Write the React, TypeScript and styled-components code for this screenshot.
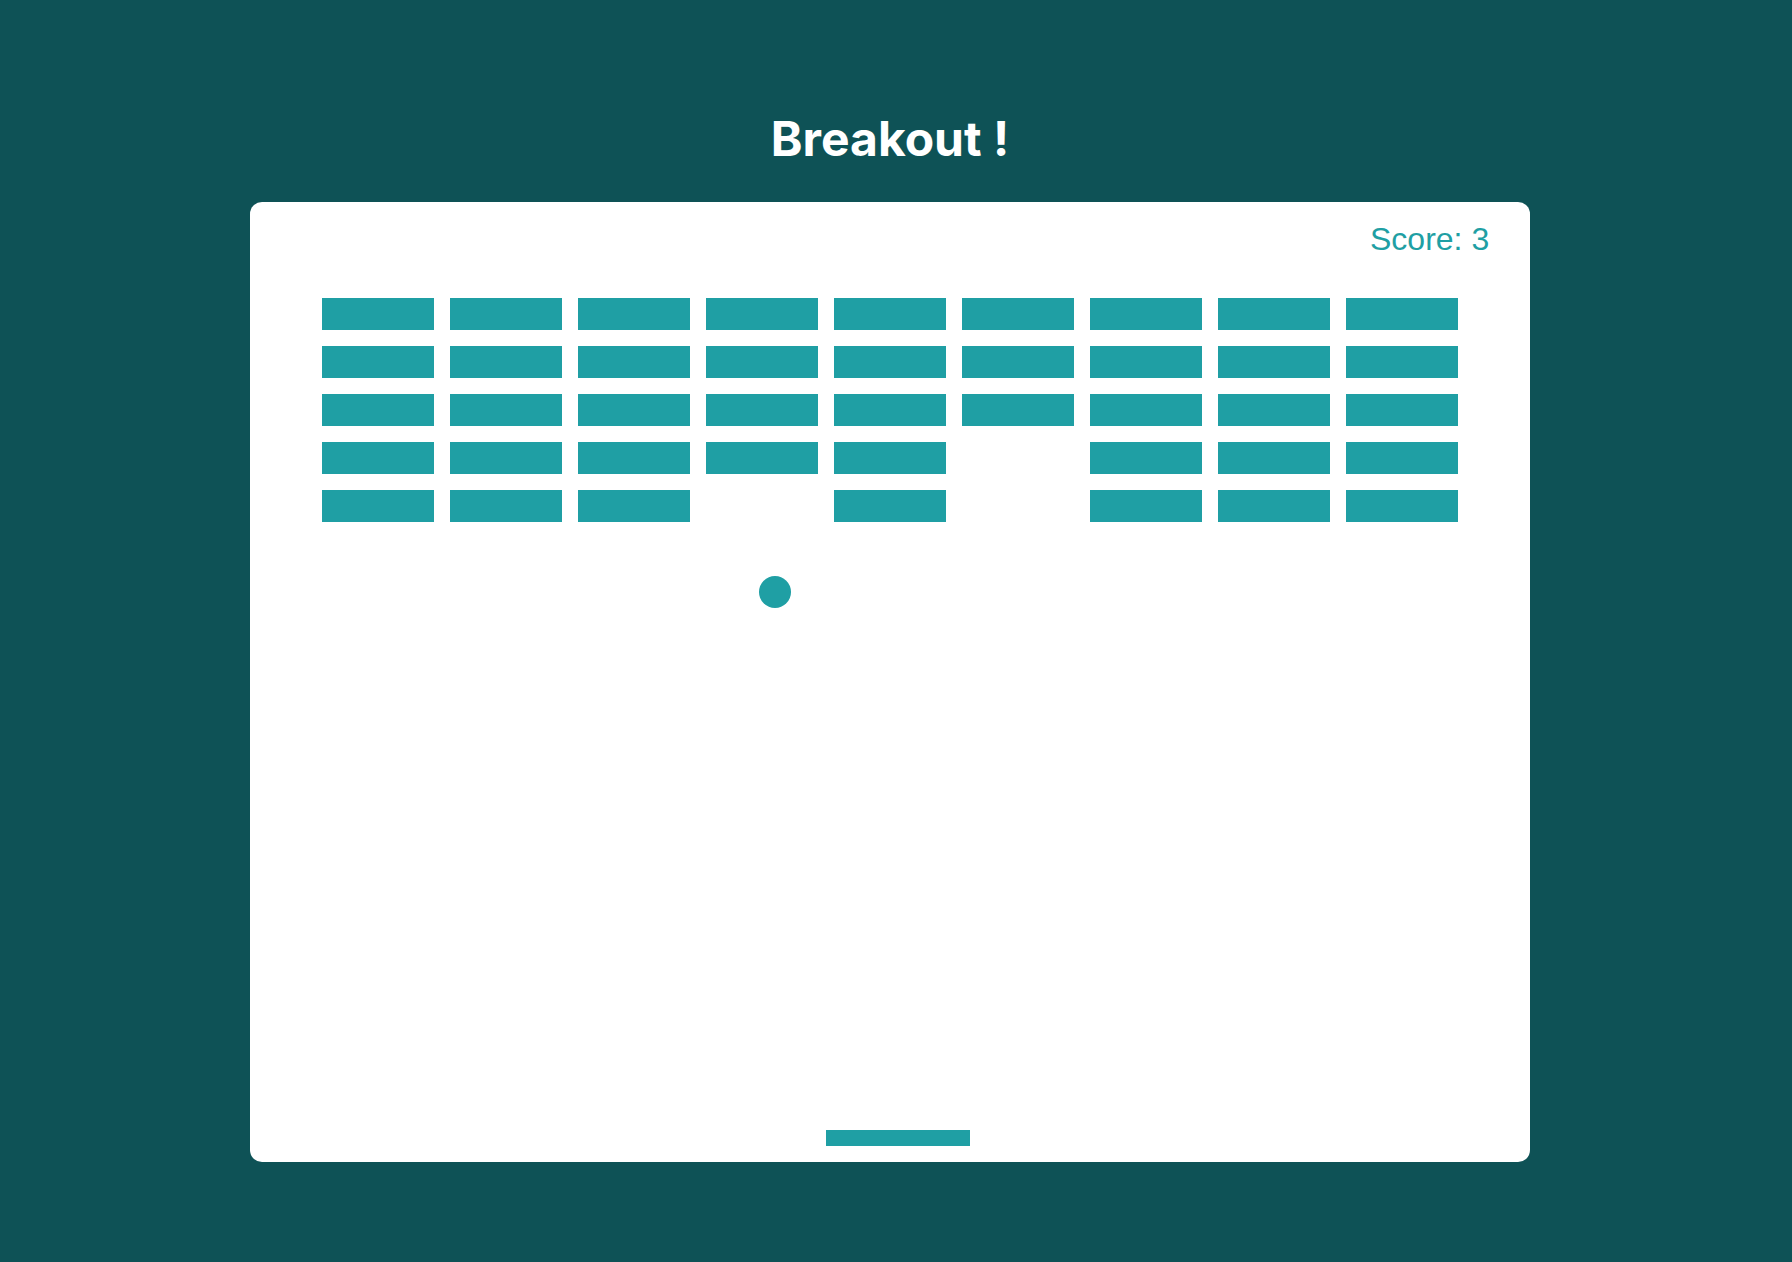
import React from "react";
import styled, { createGlobalStyle } from "styled-components";

const GlobalStyle = createGlobalStyle`
  html, body {
    margin: 0;
    padding: 0;
    background: #0e5256;
  }
  * { box-sizing: border-box; }
`;

const TEAL = "#1f9fa4";

const Page = styled.main`
  min-height: 1262px;
  display: flex;
  flex-direction: column;
  align-items: center;
  padding: 115px 12px 0 0;
  background: #0e5256;
`;

const Title = styled.h1`
  margin: 0 0 39px;
  font-family: Inter, "Noto Sans", sans-serif;
  font-weight: 700;
  font-size: 48px;
  line-height: 48px;
  color: #ffffff;
`;

const Board = styled.div`
  position: relative;
  width: 1280px;
  height: 960px;
  background: #ffffff;
  border-radius: 12px;
  padding: 96px 0 0 72px;
`;

const BrickGrid = styled.div`
  display: grid;
  grid-template-columns: repeat(9, 112px);
  grid-auto-rows: 32px;
  gap: 16px;
`;

const Brick = styled.div<{ $broken: boolean }>`
  background: ${TEAL};
  visibility: ${(p) => (p.$broken ? "hidden" : "visible")};
`;

const Score = styled.div`
  position: absolute;
  left: 1120px;
  top: 21px;
  font-family: "Liberation Sans", Arial, sans-serif;
  font-size: 32px;
  line-height: 32px;
  color: ${TEAL};
`;

const Ball = styled.div`
  position: absolute;
  left: 509px;
  top: 374px;
  width: 32px;
  height: 32px;
  border-radius: 50%;
  background: ${TEAL};
`;

const Paddle = styled.div`
  position: absolute;
  left: 576px;
  top: 928px;
  width: 144px;
  height: 16px;
  background: ${TEAL};
`;

const broken = new Set(["3-5", "4-3", "4-5"]);

export default function App() {
  const rows = 5;
  const cols = 9;
  const bricks: React.ReactNode[] = [];
  for (let r = 0; r < rows; r++) {
    for (let c = 0; c < cols; c++) {
      bricks.push(<Brick key={`${r}-${c}`} $broken={broken.has(`${r}-${c}`)} />);
    }
  }
  return (
    <>
      <GlobalStyle />
      <Page>
        <Title>Breakout !</Title>
        <Board>
          <Score>Score: 3</Score>
          <BrickGrid>{bricks}</BrickGrid>
          <Ball />
          <Paddle />
        </Board>
      </Page>
    </>
  );
}
